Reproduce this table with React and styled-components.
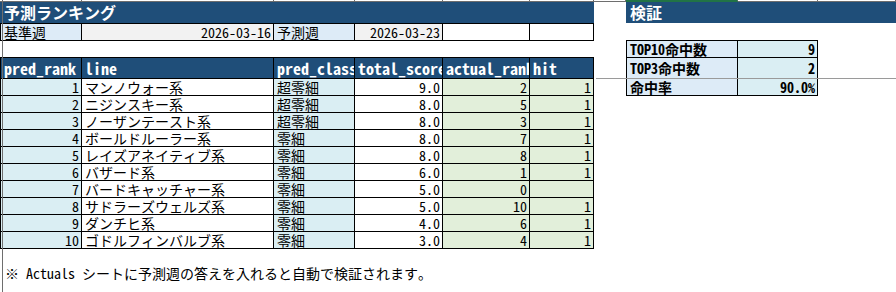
import React from "react";
import styled, { createGlobalStyle } from "styled-components";

const NAVY = "#1f4e79";
const LABEL_BG = "#ddebf7";
const DATE_BG = "#f2f2f2";
const TEAL_BG = "#daeef3";
const GREEN_BG = "#e2efda";

// spreadsheet column widths (left sheet block)
const COLS = "81px 192px 81px 88px 87px 64px";

const GlobalStyle = createGlobalStyle`
  html, body {
    margin: 0;
    padding: 0;
    background: #fff;
  }
  body {
    font-family: "Noto Sans Mono CJK JP", "Noto Sans CJK JP", "DejaVu Sans Mono", monospace;
    font-size: 14px;
    color: #000;
    overflow: hidden;
  }
`;

const Page = styled.div`
  position: relative;
  width: 896px;
  height: 292px;
  overflow: hidden;
`;

const ColumnStrip = styled.div`
  display: grid;
  grid-template-columns: 82px 192px 81px 88px 87px 64px 32px 112px 80px 1fr;
  height: 2px;
`;

const StripCell = styled.div`
  border-bottom: ${(p) => (p.$active ? "2px solid #217346" : "1px solid #6e6e6e")};
  border-right: 1px solid #6e6e6e;
`;

const Sheet = styled.div`
  display: flex;
  gap: 32px;
`;

const RankBlock = styled.div`
  width: 594px;
  display: flex;
  flex-direction: column;
`;

const VerifyBlock = styled.div`
  flex: 1;
  display: flex;
  flex-direction: column;
`;

const TitleBar = styled.div`
  height: 21px;
  background: ${NAVY};
  color: #fff;
  font-weight: bold;
  font-size: 16px;
  line-height: 21px;
  padding: 0 4px;
`;

const Row = styled.div`
  display: grid;
  grid-template-columns: ${(p) => p.$cols || COLS};
  border-left: 1px solid #000;
  border-top: ${(p) => (p.$first ? "1px solid #000" : "none")};
`;

const VerifyTable = styled.div`
  width: 192px;
`;

const Cell = styled.div`
  height: ${(p) => p.$h || 17}px;
  box-sizing: border-box;
  border-right: 1px solid #000;
  border-bottom: 1px solid #000;
  background: ${(p) => p.$bg || "#fff"};
  color: ${(p) => p.$color || "#000"};
  font-weight: ${(p) => (p.$bold ? "bold" : "normal")};
  font-size: ${(p) => p.$size || 14}px;
  text-align: ${(p) => p.$align || "left"};
  padding: 0 2px 0 3px;
  line-height: ${(p) => (p.$h || 17) - 1}px;
  white-space: nowrap;
  overflow: hidden;
`;

const Spacer = styled.div`
  height: ${(p) => p.$h}px;
`;

const Note = styled.div`
  margin-top: 16px;
  height: 17px;
  line-height: 17px;
  padding-left: 5px;
  white-space: nowrap;
`;

const FreezeLine = styled.div`
  position: absolute;
  background: ${(p) => p.$color};
  ${(p) => p.$pos}
`;

const ranking = [
  { rank: 1, line: "マンノウォー系", cls: "超零細", score: "9.0", actual: 2, hit: 1 },
  { rank: 2, line: "ニジンスキー系", cls: "超零細", score: "8.0", actual: 5, hit: 1 },
  { rank: 3, line: "ノーザンテースト系", cls: "超零細", score: "8.0", actual: 3, hit: 1 },
  { rank: 4, line: "ボールドルーラー系", cls: "零細", score: "8.0", actual: 7, hit: 1 },
  { rank: 5, line: "レイズアネイティブ系", cls: "零細", score: "8.0", actual: 8, hit: 1 },
  { rank: 6, line: "バザード系", cls: "零細", score: "6.0", actual: 1, hit: 1 },
  { rank: 7, line: "バードキャッチャー系", cls: "零細", score: "5.0", actual: 0, hit: "" },
  { rank: 8, line: "サドラーズウェルズ系", cls: "零細", score: "5.0", actual: 10, hit: 1 },
  { rank: 9, line: "ダンチヒ系", cls: "零細", score: "4.0", actual: 6, hit: 1 },
  { rank: 10, line: "ゴドルフィンバルブ系", cls: "零細", score: "3.0", actual: 4, hit: 1 }
];

const verify = [
  { label: "TOP10命中数", value: "9", h: 17 },
  { label: "TOP3命中数", value: "2", h: 21 },
  { label: "命中率", value: "90.0%", h: 17 }
];

const headers = ["pred_rank", "line", "pred_class", "total_score", "actual_rank", "hit"];

const App = () => {
  return (
    <Page>
      <GlobalStyle />
      <ColumnStrip>
        {Array.from({ length: 10 }).map((_, i) => (
          <StripCell key={i} $active={i === 7} />
        ))}
      </ColumnStrip>
      <Sheet>
        <RankBlock>
          <TitleBar>予測ランキング</TitleBar>
          <Row $first>
            <Cell $bg={LABEL_BG}>基準週</Cell>
            <Cell $bg={DATE_BG} $align="right">2026-03-16</Cell>
            <Cell $bg={LABEL_BG}>予測週</Cell>
            <Cell $bg={DATE_BG} $align="right">2026-03-23</Cell>
            <Cell />
            <Cell />
          </Row>
          <Spacer $h={16} />
          <Row $first>
            {headers.map((h) => (
              <Cell key={h} $h={21} $bg={NAVY} $color="#fff" $bold $size={16}>
                {h}
              </Cell>
            ))}
          </Row>
          {ranking.map((r) => (
            <Row key={r.rank}>
              <Cell $bg={TEAL_BG} $align="right">{r.rank}</Cell>
              <Cell>{r.line}</Cell>
              <Cell $bg={TEAL_BG}>{r.cls}</Cell>
              <Cell $align="right">{r.score}</Cell>
              <Cell $bg={GREEN_BG} $align="right">{r.actual}</Cell>
              <Cell $bg={GREEN_BG} $align="right">{r.hit}</Cell>
            </Row>
          ))}
          <Note>※ Actuals シートに予測週の答えを入れると自動で検証されます。</Note>
        </RankBlock>
        <VerifyBlock>
          <TitleBar>検証</TitleBar>
          <Spacer $h={17} />
          <VerifyTable>
            {verify.map((v, i) => (
              <Row key={v.label} $first={i === 0} $cols="111px 80px">
                <Cell $h={v.h} $bg={LABEL_BG} $bold>{v.label}</Cell>
                <Cell $h={v.h} $bg={TEAL_BG} $bold $align="right">{v.value}</Cell>
              </Row>
            ))}
          </VerifyTable>
        </VerifyBlock>
      </Sheet>
      <FreezeLine $color="#9a9a9a" $pos="left: 596px; right: 0; top: 78px; height: 1px;" />
      <FreezeLine $color="#6e6e6e" $pos="left: 2px; top: 0; bottom: 0; width: 1px;" />
    </Page>
  );
};

export default App;
